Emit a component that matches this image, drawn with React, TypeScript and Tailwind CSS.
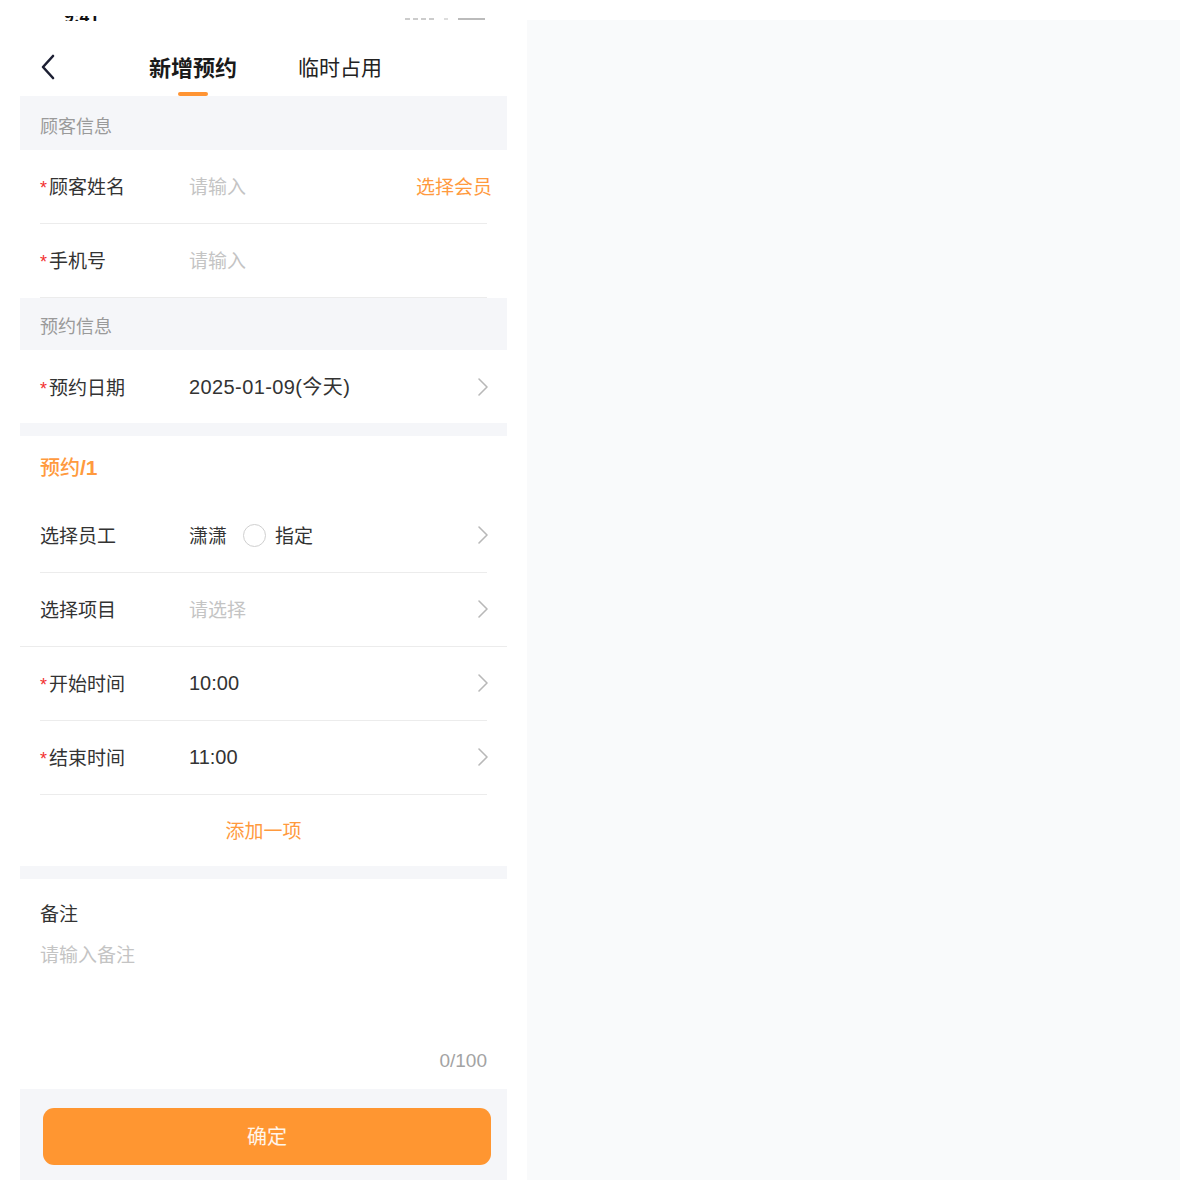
import React from "react";

const Chevron = () => (
  <svg width="12" height="20" viewBox="0 0 12 20" className="shrink-0">
    <polyline points="2,2 10,10 2,18" fill="none" stroke="#b8b8b8" strokeWidth="1.6" strokeLinecap="round" strokeLinejoin="round" />
  </svg>
);

const Star = () => (
  <span className="w-[9px] text-[18px] text-[#f23030] leading-none mt-[4px] font-['Liberation_Sans',sans-serif]">*</span>
);

function Row({
  label,
  required,
  children,
  chevron,
  divider = "inset",
}: {
  label: string;
  required?: boolean;
  children?: React.ReactNode;
  chevron?: boolean;
  divider?: "inset" | "full" | "none";
}) {
  const inner = (
    <div className="flex items-center h-[73px]">
      <div className="w-[149px] flex items-center text-[19px] text-[#333]">
        {required && <Star />}
        <span>{label}</span>
      </div>
      <div className="flex-1 flex items-center text-[19px]">{children}</div>
      {chevron && (
        <div className="mr-[-2px]">
          <Chevron />
        </div>
      )}
    </div>
  );
  if (divider === "full")
    return <div className="px-[20px] border-b border-[#ececec]">{inner}</div>;
  if (divider === "none") return <div className="px-[20px]">{inner}</div>;
  return (
    <div className="px-[20px]">
      <div className="border-b border-[#ececec]">{inner}</div>
    </div>
  );
}

const Num = ({ children, className = "" }: { children: React.ReactNode; className?: string }) => (
  <span className={"font-['Liberation_Sans','Noto_Sans_CJK_SC',sans-serif] " + className}>{children}</span>
);

export default function App() {
  return (
    <div className="flex gap-[20px] px-[20px] pb-[20px] bg-white font-['Noto_Sans_CJK_SC','Noto_Sans',sans-serif] w-[1200px] h-[1200px]">
      {/* left phone panel */}
      <div className="w-[487px] flex flex-col bg-white">
        {/* status bar remnant */}
        <div className="h-[22px] flex flex-col justify-end">
          <div className="h-[5px] mb-[1px] overflow-hidden flex items-end justify-between pl-[44px] pr-[22px]">
            <span className="text-[17px] font-semibold text-[#111] leading-[17px] h-[5px] flex items-end">
              <span className="block -mb-[3px]">9:41</span>
            </span>
            <div className="flex items-end gap-[10px] mb-[1px]">
              <div className="flex gap-[3px]">
                <div className="w-[5px] h-[2px] bg-[#ccc]" />
                <div className="w-[5px] h-[2px] bg-[#ccc]" />
                <div className="w-[5px] h-[2px] bg-[#ccc]" />
                <div className="w-[5px] h-[2px] bg-[#ccc]" />
              </div>
              <div className="w-[4px] h-[2px] bg-[#ddd]" />
              <div className="w-[27px] h-[2px] bg-[#bbb]" />
            </div>
          </div>
        </div>

        {/* header */}
        <div className="h-[75px] flex items-end">
          <div className="ml-[20px] mb-[16px]">
            <svg width="16" height="26" viewBox="0 0 16 26">
              <polyline points="13,2 3,13 13,24" fill="none" stroke="#1c1f33" strokeWidth="2.6" strokeLinecap="round" strokeLinejoin="round" />
            </svg>
          </div>
          <div className="ml-[93px] flex flex-col items-center">
            <span className="text-[22px] font-bold text-[#1a1a1a] leading-[30px]">新增预约</span>
            <div className="w-[30px] h-[4px] rounded-full bg-[#ff9433] mt-[11px]" />
          </div>
          <span className="ml-[61px] mb-[15px] text-[21px] text-[#222] leading-[30px]">临时占用</span>
        </div>

        <div className="h-[54px] bg-[#f5f6f9] px-[20px] flex items-center pt-[4px] text-[18px] text-[#9a9a9a]">顾客信息</div>
        <Row label="顾客姓名" required>
          <span className="flex-1 text-[#c4c4c4]">请输入</span>
          <span className="text-[#ff9a3e] mr-[-5px]">选择会员</span>
        </Row>
        <Row label="手机号" required>
          <span className="text-[#c4c4c4]">请输入</span>
        </Row>
        <div className="h-[53px] bg-[#f5f6f9] px-[20px] flex items-center pt-[2px] text-[18px] text-[#9a9a9a]">预约信息</div>
        <Row label="预约日期" required chevron divider="none">
          <Num className="text-[#333] text-[20px] tracking-[0.4px]">2025-01-09(今天)</Num>
        </Row>
        <div className="h-[13px] bg-[#f5f6f9]" />

        <div className="h-[63px] px-[20px] flex items-center pt-[1px]">
          <span className="text-[20px] font-medium text-[#ff9a3e]">
            预约<Num className="text-[21px] font-bold">/1</Num>
          </span>
        </div>
        <Row label="选择员工" chevron>
          <span className="text-[#333]">潇潇</span>
          <span className="ml-[16px] w-[23px] h-[23px] rounded-full border-[1.5px] border-[#cfcfcf]" />
          <span className="ml-[9px] text-[#333]">指定</span>
        </Row>
        <Row label="选择项目" chevron divider="full">
          <span className="text-[#c4c4c4]">请选择</span>
        </Row>
        <Row label="开始时间" required chevron>
          <Num className="text-[#333] text-[20px]">10:00</Num>
        </Row>
        <Row label="结束时间" required chevron>
          <Num className="text-[#333] text-[20px]">11:00</Num>
        </Row>
        <div className="h-[72px] flex items-center justify-center">
          <span className="text-[19px] text-[#ff9a3e]">添加一项</span>
        </div>
        <div className="h-[13px] bg-[#f5f6f9]" />

        {/* remarks */}
        <div className="h-[211px] px-[20px] pt-[21px] flex flex-col">
          <span className="text-[19px] leading-[26px] text-[#333]">备注</span>
          <span className="mt-[15px] text-[19px] leading-[26px] text-[#c4c4c4]">请输入备注</span>
          <div className="flex-1" />
          <Num className="self-end mb-[16px] text-[19px] leading-[24px] text-[#a3a3a3]">0/100</Num>
        </div>

        {/* bottom bar */}
        <div className="h-[92px] bg-[#f5f6f9] pt-[19px]">
          <button className="ml-[23px] w-[448px] h-[57px] rounded-[11px] bg-[#ff9631] flex items-center justify-center text-[20px] text-white/90">
            确定
          </button>
        </div>
      </div>

      {/* right empty panel */}
      <div className="mt-[20px] w-[653px] h-[1160px] bg-[#f9fafb]" />
    </div>
  );
}
